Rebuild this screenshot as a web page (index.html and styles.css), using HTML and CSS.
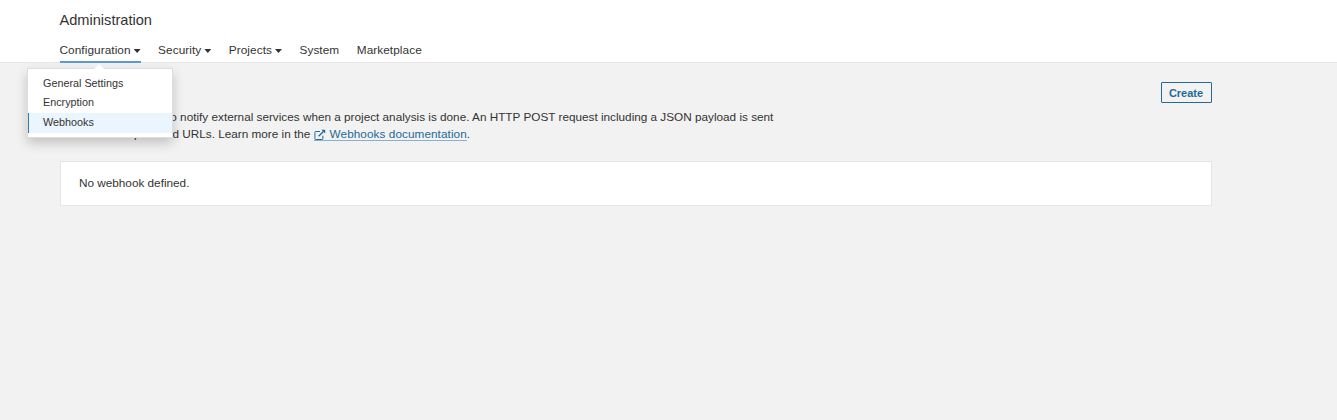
FILE: index.html
```html
<!DOCTYPE html>
<html lang="en">
<head>
<meta charset="utf-8">
<title>Webhooks - Administration</title>
<link rel="stylesheet" href="styles.css">
</head>
<body>
<header class="header">
  <h1 class="title">Administration</h1>
  <nav class="tabs">
    <div class="tab active"><a class="tab-label">Configuration<i class="caret"></i></a>
      <ul class="menu">
        <li class="item"><span>General Settings</span></li>
        <li class="item"><span>Encryption</span></li>
        <li class="item selected"><span>Webhooks</span></li>
      </ul>
    </div>
    <div class="tab"><a class="tab-label">Security<i class="caret"></i></a></div>
    <div class="tab"><a class="tab-label">Projects<i class="caret"></i></a></div>
    <div class="tab"><a class="tab-label">System</a></div>
    <div class="tab"><a class="tab-label">Marketplace</a></div>
  </nav>
</header>
<main class="page">
  <div class="page-header">
    <h2 class="page-title">Webhooks</h2>
    <button class="create">Create</button>
  </div>
  <p class="description"><span class="line">Webhooks are used to notify external services when a project analysis is done. An HTTP POST request including a JSON payload is sent</span> <span class="line">to each of the provided URLs. Learn more in the <a class="link"><svg class="link-icon" width="12" height="12" viewBox="0 0 12 12" fill="none" stroke="currentColor"><path d="M6 2.5H1.8Q.9 2.5.9 3.4v6.2q0 .9.9.9H8q.9 0 .9-.9V6.7"/><path d="M4.6 7.3 9.7 2.2" stroke-width="1.3"/><path d="M7.4.8h3.8v3.8z" fill="currentColor" stroke="none"/></svg>Webhooks documentation</a>.</span></p>
  <section class="panel">No webhook defined.</section>
</main>
</body>
</html>
```
FILE: styles.css
```css
* { box-sizing: border-box; }
body {
  margin: 0;
  min-height: 420px;
  background: #f2f2f2;
  color: #333;
  font: 11.75px/17px "Liberation Sans", Arial, sans-serif;
}
.header {
  height: 63px;
  padding: 11px 0 0 59.5px;
  background: #fff;
  border-bottom: 1px solid #e6e6e6;
}
.title { margin: 0; font-size: 14.6px; line-height: 18px; font-weight: 400; }
.tabs { display: flex; gap: 17.5px; margin-top: 11px; font-size: 11.8px; letter-spacing: .07px; }
.tab { position: relative; height: 23px; }
.tab-label { display: flex; align-items: center; height: 20px; line-height: 16px; white-space: nowrap; }
.active { border-bottom: 2px solid #5b9bd1; }
.caret {
  width: 7px;
  height: 4px;
  margin: 2px 0 0 3px;
  background: #333;
  clip-path: polygon(0 0, 100% 0, 50% 100%);
}
.menu {
  position: absolute;
  z-index: 2;
  top: 28px;
  left: -32.5px;
  width: 146px;
  height: 70px;
  margin: 0;
  padding: 5px 0;
  list-style: none;
  background: #fff;
  border: 1px solid #dedede;
  box-shadow: 0 5px 11px rgba(0, 0, 0, .2);
  font-size: 10.8px;
  letter-spacing: 0;
}
.menu::before {
  content: "";
  position: absolute;
  top: -5px;
  left: 65px;
  border: 6px solid transparent;
  border-top: 0;
  border-bottom-color: #fff;
}
.item { height: 19.5px; padding-left: 15px; line-height: 17px; }
.item:first-child { line-height: 19px; }
.item.selected { padding-left: 14px; line-height: 19px; background: #ebf5fd; border-left: 1px solid #3476b2; }
.page { padding: 19px 125px 0 60px; }
.page-header { display: flex; justify-content: space-between; height: 26px; }
.page-title { margin: 0; font-size: 14.4px; font-weight: 400; }
.create {
  width: 51px;
  height: 21px;
  padding: 1px 1px 0 0;
  border: 1px solid #236a97;
  border-radius: 1px;
  background: transparent;
  color: #236a97;
  font: bold 11px/18px "Liberation Sans", Arial, sans-serif;
}
.description { margin: 0 0 19px -.5px; }
.line { display: block; height: 17px; white-space: nowrap; }
.link { color: #236a97; border-bottom: 1px solid #8bb0cb; letter-spacing: .07px; }
.link-icon { margin-right: 4px; vertical-align: -3px; }
.panel { height: 45px; padding: 12px 18px; border: 1px solid #e6e6e6; background: #fff; }
```
